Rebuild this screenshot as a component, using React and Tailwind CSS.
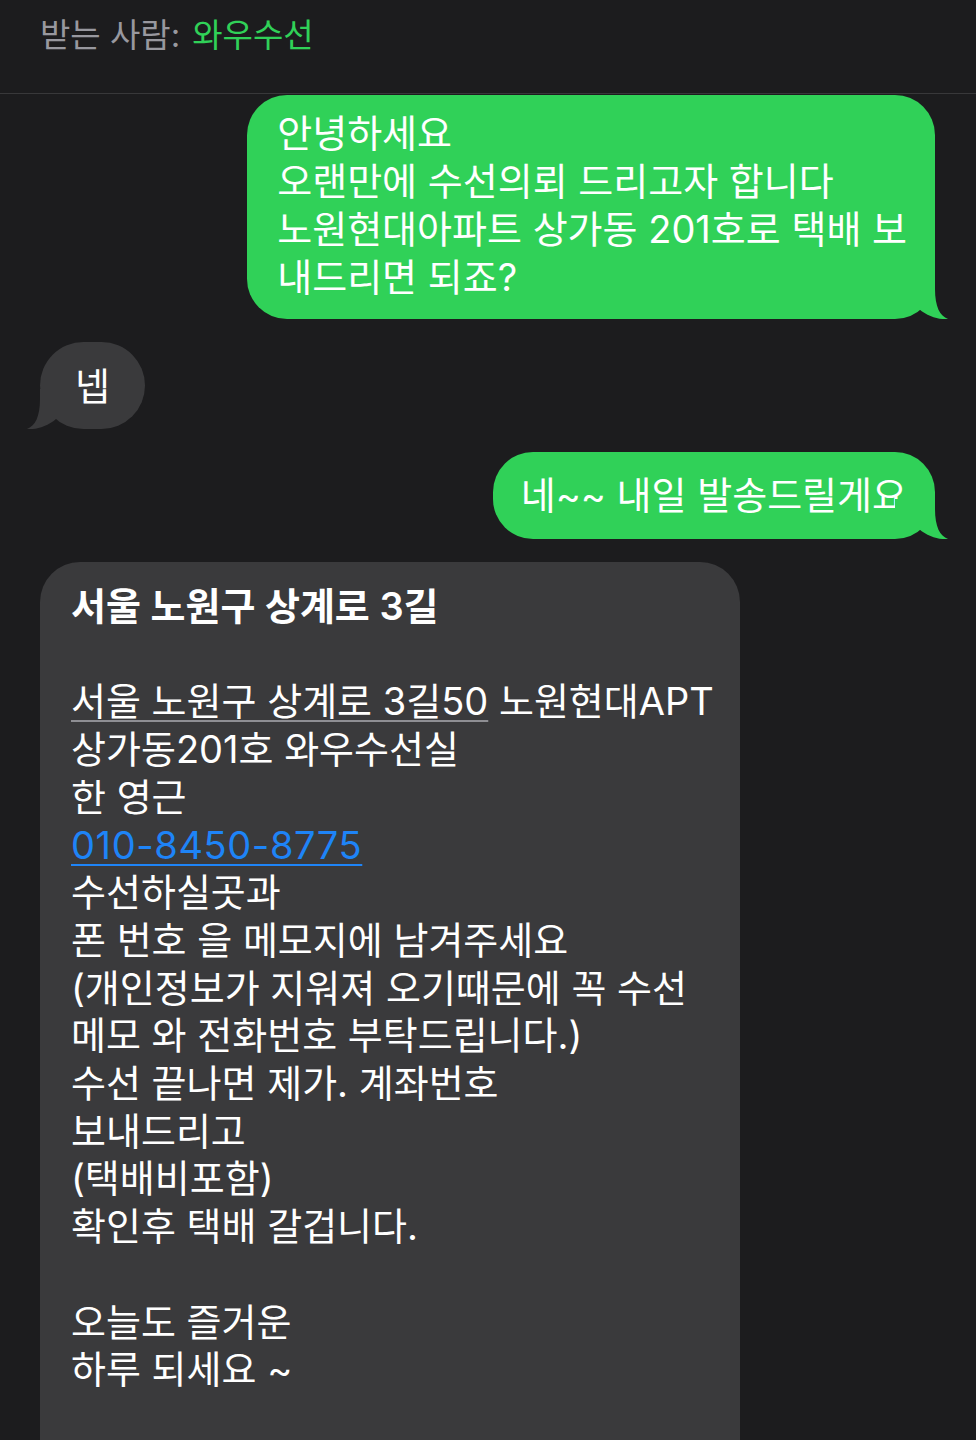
import React from "react";

const GREEN = "#30d158";
const GRAY = "#3a3a3c";

// bubble tail, drawn for the right side; flipped for incoming
const Tail = ({ color, side }) => (
  <svg
    width="54"
    height="40"
    viewBox="0 0 54 40"
    className={
      side === "right"
        ? "absolute bottom-0 right-[-14px]"
        : "absolute bottom-0 left-[-14px] -scale-x-100"
    }
  >
    <path
      d="M40 0 L40 10 C40 28 45 37 53 40 C45 40.8 33 38 24 30 L0 30 L0 0 Z"
      fill={color}
    />
  </svg>
);

const Outgoing = ({ lines, className }) => (
  <div className="flex justify-end">
    <div
      className={`relative rounded-[40px] bg-[#30d158] text-white text-[38px] leading-[48px] ${className}`}
    >
      {lines.map((l, i) => (
        <div key={i} className="whitespace-nowrap">
          {l}
        </div>
      ))}
      <Tail color={GREEN} side="right" />
    </div>
  </div>
);

const App = () => {
  return (
    <div className="h-[1440px] overflow-hidden bg-[#1c1c1e] font-['Inter','Noto_Sans_CJK_KR',sans-serif]">
      {/* header */}
      <div className="h-[93px] px-[40px] pt-[13px] text-[33px] leading-[44px]">
        <span className="text-[#98989f]">받는 사람:</span>
        <span className="ml-[12px] text-[#30d158]">와우수선</span>
      </div>
      <div className="h-px bg-[#38383a]" />

      <div className="flex flex-col gap-[23px] pl-[40px] pr-[41px] pt-[1px]">
        <Outgoing
          className="pl-[30px] pr-[28px] pt-[14px] pb-[18px]"
          lines={[
            "안녕하세요",
            "오랜만에 수선의뢰 드리고자 합니다",
            "노원현대아파트 상가동 201호로 택배 보",
            "내드리면 되죠?",
          ]}
        />

        <div className="flex justify-start">
          <div className="relative flex h-[87px] w-[105px] items-center justify-center rounded-[44px] bg-[#3a3a3c] text-[38px] leading-[48px] text-white">
            넵
            <Tail color={GRAY} side="left" />
          </div>
        </div>

        <Outgoing
          className="pl-[28px] pr-[28px] pt-[19px] pb-[20px]"
          lines={["네~~ 내일 발송드릴게요"]}
        />

        <div className="flex justify-start">
          <div className="w-[700px] rounded-[40px] bg-[#3a3a3c] pl-[31px] pr-[20px] pt-[21px] pb-[120px] text-[38px] leading-[47.7px] text-white">
            <div className="font-semibold">서울 노원구 상계로 3길</div>
            <div className="h-[47.7px]" />
            <div className="whitespace-nowrap">
              <span className="underline decoration-[#8e8e93] decoration-2 underline-offset-[5px]">
                서울 노원구 상계로 3길50
              </span>{" "}
              노원현대APT
            </div>
            <div>상가동201호 와우수선실</div>
            <div>한 영근</div>
            <div>
              <span className="text-[#1e84f7] underline decoration-[#1e84f7] decoration-2 underline-offset-[5px] tracking-[0.6px]">
                010-8450-8775
              </span>
            </div>
            <div>수선하실곳과</div>
            <div>폰 번호 을 메모지에 남겨주세요</div>
            <div className="whitespace-nowrap">(개인정보가 지워져 오기때문에 꼭 수선</div>
            <div>메모 와 전화번호 부탁드립니다.)</div>
            <div>수선 끝나면 제가. 계좌번호</div>
            <div>보내드리고</div>
            <div>(택배비포함)</div>
            <div>확인후 택배 갈겁니다.</div>
            <div className="h-[47.7px]" />
            <div>오늘도 즐거운</div>
            <div>하루 되세요 ~</div>
          </div>
        </div>
      </div>
    </div>
  );
};

export default App;
